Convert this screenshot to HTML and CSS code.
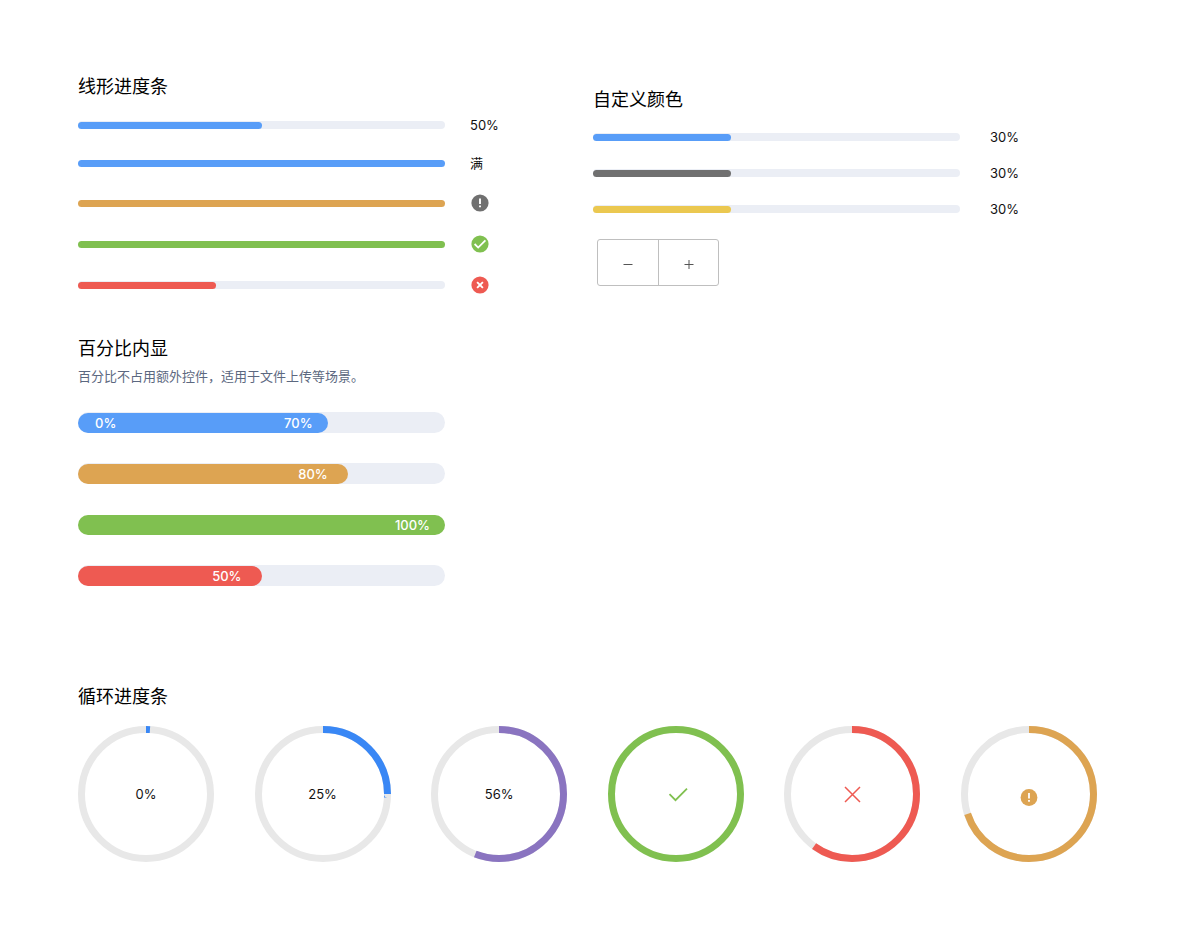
FILE: index.html
```
<!DOCTYPE html>
<html lang="zh-CN">
<head>
<meta charset="utf-8">
<meta name="viewport" content="width=device-width, initial-scale=1">
<title>进度条</title>
<link rel="stylesheet" href="styles.css">
</head>
<body>
<main class="page">
  <div class="columns">
    <div class="column">
      <section>
        <h2 class="title">线形进度条</h2>
        <div class="lines">
          <div class="line">
            <div class="track"><div class="fill blue" style="width:50%"></div></div>
            <span class="label">50%</span>
          </div>
          <div class="line">
            <div class="track full"><div class="fill blue"></div></div>
            <span class="label">满</span>
          </div>
          <div class="line status">
            <div class="track full"><div class="fill orange"></div></div>
            <span class="label"><svg class="icon" viewBox="0 0 20 20" role="img" aria-label="警告"><circle cx="10" cy="10" r="8.6" fill="#707070"/><path d="M10 5.4v5.6M10 12.4v1.8" stroke="#fff" stroke-width="1.9"/></svg></span>
          </div>
          <div class="line status">
            <div class="track full"><div class="fill green"></div></div>
            <span class="label"><svg class="icon" viewBox="0 0 20 20" role="img" aria-label="成功"><circle cx="10" cy="10" r="8.6" fill="#80c050"/><path d="M4.6 10l3.6 3.6 7.2-7.2" fill="none" stroke="#fff" stroke-width="1.8"/></svg></span>
          </div>
          <div class="line status">
            <div class="track"><div class="fill red" style="width:37.5%"></div></div>
            <span class="label"><svg class="icon" viewBox="0 0 20 20" role="img" aria-label="失败"><circle cx="10" cy="10" r="8.6" fill="#ee5a52"/><path d="M7.1 7.1l5.8 5.8M12.9 7.1l-5.8 5.8" stroke="#fff" stroke-width="1.9"/></svg></span>
          </div>
        </div>
      </section>

      <section class="inside">
        <h2 class="title">百分比内显</h2>
        <p class="desc">百分比不占用额外控件，适用于文件上传等场景。</p>
        <div class="bars">
          <div class="bar"><div class="bar-fill blue" style="width:68%"><span>0%</span><span>70%</span></div></div>
          <div class="bar"><div class="bar-fill inset orange" style="width:73.5%"><span>80%</span></div></div>
          <div class="bar full"><div class="bar-fill green"><span>100%</span></div></div>
          <div class="bar"><div class="bar-fill inset red" style="width:50%"><span>50%</span></div></div>
        </div>
      </section>
    </div>

    <section class="column custom">
      <h2 class="title">自定义颜色</h2>
      <div class="lines">
        <div class="line">
          <div class="track"><div class="fill blue" style="width:37.5%"></div></div>
          <span class="label">30%</span>
        </div>
        <div class="line">
          <div class="track"><div class="fill gray" style="width:37.5%"></div></div>
          <span class="label">30%</span>
        </div>
        <div class="line">
          <div class="track"><div class="fill yellow" style="width:37.5%"></div></div>
          <span class="label">30%</span>
        </div>
      </div>
      <div class="stepper">
        <button type="button" aria-label="减少"><svg class="sign" viewBox="0 0 10 10"><path d="M0.5 5.5h9"/></svg></button>
        <button type="button" aria-label="增加"><svg class="sign" viewBox="0 0 10 10"><path d="M0.5 5.5h9M5 1v9"/></svg></button>
      </div>
    </section>
  </div>

  <section class="circular">
    <h2 class="title">循环进度条</h2>
    <div class="rings">
      <div class="ring">
        <svg viewBox="0 0 136 136"><circle class="ring-track" cx="68" cy="68" r="64.5"/><circle class="ring-arc" cx="68" cy="68" r="64.5" pathLength="100" stroke="#3987f5" stroke-dasharray="1 100"/></svg>
        <span>0%</span>
      </div>
      <div class="ring">
        <svg viewBox="0 0 136 136"><circle class="ring-track" cx="68" cy="68" r="64.5"/><circle class="ring-arc" cx="68" cy="68" r="64.5" pathLength="100" stroke="#3987f5" stroke-dasharray="25 100"/></svg>
        <span>25%</span>
      </div>
      <div class="ring">
        <svg viewBox="0 0 136 136"><circle class="ring-track" cx="68" cy="68" r="64.5"/><circle class="ring-arc" cx="68" cy="68" r="64.5" pathLength="100" stroke="#8a74c0" stroke-dasharray="56 100"/></svg>
        <span>56%</span>
      </div>
      <div class="ring">
        <svg viewBox="0 0 136 136" role="img" aria-label="成功"><circle class="ring-arc" cx="68" cy="68" r="64.5" stroke="#80c050"/><path d="M61.5 68.2l6 6L79 62.6" fill="none" stroke="#80c050" stroke-width="1.8"/></svg>
      </div>
      <div class="ring">
        <svg viewBox="0 0 136 136" role="img" aria-label="失败"><circle class="ring-track" cx="68" cy="68" r="64.5"/><circle class="ring-arc" cx="68" cy="68" r="64.5" pathLength="100" stroke="#ee5a52" stroke-dasharray="60 100"/><path d="M61 61l15 15M76 61L61 76" stroke="#ee5a52" stroke-width="1.5"/></svg>
      </div>
      <div class="ring">
        <svg viewBox="0 0 136 136" role="img" aria-label="警告"><circle class="ring-track" cx="68" cy="68" r="64.5"/><circle class="ring-arc" cx="68" cy="68" r="64.5" pathLength="100" stroke="#dda452" stroke-dasharray="70 100"/><circle cx="68" cy="71.5" r="8.4" fill="#dda452"/><path d="M68 67v5.6M68 74v1.8" stroke="#fff" stroke-width="1.8"/></svg>
      </div>
    </div>
  </section>
</main>
</body>
</html>
```
FILE: styles.css
```
* {
  box-sizing: border-box;
}

body {
  margin: 0;
  background: #fff;
  color: #111;
  font-family: Inter, "Noto Sans CJK SC", sans-serif;
  font-size: 13px;
  line-height: 18px;
}

.page {
  padding: 75px 78px 64px;
}

.columns {
  display: grid;
  grid-template-columns: 1fr 1fr;
  gap: 6px;
}

.title {
  margin: 0;
  color: #000;
  font-size: 18px;
  font-weight: 400;
  line-height: 24px;
}

/* Linear bars */
.lines {
  display: flex;
  flex-direction: column;
  gap: 20px;
  margin-top: 17px;
}

.line {
  display: flex;
  align-items: center;
  height: 18px;
}

.status {
  height: 21px;
}

.track {
  flex: 1;
  height: 8px;
  padding-top: 1px;
  border-radius: 4px;
  background: #ebeef5;
}

.fill {
  height: 7px;
  border-radius: 4px;
}

.full {
  background: none;
}

.label {
  display: flex;
  width: 142px;
  padding-left: 25px;
}

.icon {
  width: 20px;
  height: 20px;
}

.blue { background: #589df8; }
.orange { background: #dda452; }
.green { background: #80c050; }
.red { background: #ee5a52; }
.gray { background: #707070; }
.yellow { background: #ebc850; }

/* Bars with the value inside */
.inside {
  margin-top: 42px;
}

.desc {
  margin: 5px 0 0;
  color: #5c6880;
  line-height: 20px;
}

.bars {
  display: flex;
  flex-direction: column;
  gap: 30px;
  margin: 26px 142px 0 0;
}

.bar {
  height: 21px;
  padding-top: 1px;
  border-radius: 11px;
  background: #ebeef5;
}

.bar.full {
  background: none;
}

.bar-fill {
  display: flex;
  align-items: center;
  justify-content: space-between;
  height: 20px;
  padding: 0 15px 0 17px;
  border-radius: 10px;
  color: #fff;
  font-weight: 500;
}

.bar-fill span:last-child {
  margin-left: auto;
}

.inset {
  padding-right: 20px;
}

/* Custom colours */
.custom {
  padding-top: 13px;
}

.custom .lines {
  gap: 18px;
  margin-top: 16px;
}

.custom .label {
  padding-left: 30px;
}

.stepper {
  display: inline-flex;
  margin: 21px 0 0 4px;
  border: 1px solid #bfbfbf;
  border-radius: 3px;
}

.stepper button {
  display: flex;
  align-items: center;
  justify-content: center;
  width: 60px;
  height: 45px;
  padding: 3px 0 0;
  border: 0;
  background: none;
  cursor: pointer;
}

.stepper button + button {
  border-left: 1px solid #bfbfbf;
}

.sign {
  width: 10px;
  height: 10px;
  fill: none;
  stroke: #555;
}

/* Circular progress */
.circular {
  margin-top: 99px;
}

.rings {
  display: flex;
  justify-content: space-between;
  margin: 17px 5px 0 0;
}

.ring {
  display: grid;
  place-items: center;
  width: 136px;
}

.ring > * {
  grid-area: 1 / 1;
}

.ring svg {
  width: 100%;
}

.ring-track,
.ring-arc {
  fill: none;
  stroke-width: 7;
}

.ring-track {
  stroke: #e8e8e8;
}

.ring-arc {
  transform: rotate(-90deg);
  transform-origin: center;
}
```
